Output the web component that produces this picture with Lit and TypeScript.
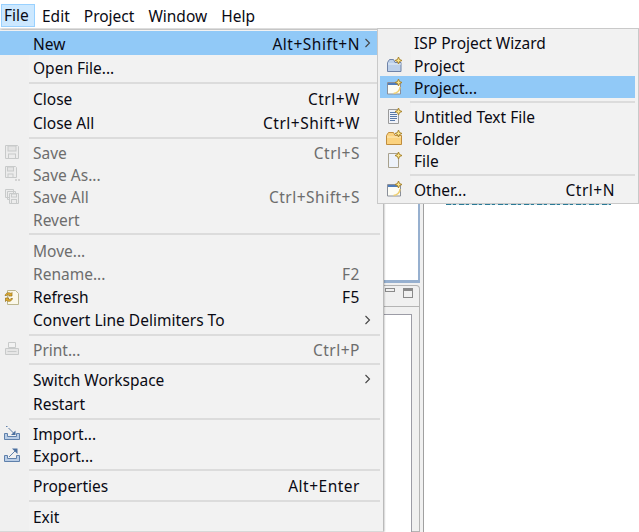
import { LitElement, html, css, svg } from "lit";
import { customElement } from "lit/decorators.js";

const plus = (x: number, y: number) => svg`<path d="M${x} ${y - 3.500}L${x + 1} ${y - 1}L${x + 3.500} ${y}L${x + 1} ${y + 1}L${x} ${y + 3.500}L${x - 1} ${y + 1}L${x - 3.500} ${y}L${x - 1} ${y - 1}Z" fill="#fbe58a" stroke="#a9842c" stroke-width="1"/>`;
const ic = (c: unknown) => html`<svg class="ic" width="18" height="18" viewBox="0 0 18 18">${c}</svg>`;
const grey = "#c8caca";
const icons: Record<string, unknown> = {
  save: ic(svg`<path d="M2.500 2.500h12l1 1v12h-13z" fill="#ececec" stroke="${grey}"/><rect x="5" y="3" width="8" height="5" fill="#e4e4e4" stroke="${grey}"/><rect x="5.500" y="11" width="7" height="4.500" fill="none" stroke="${grey}"/>`),
  saveas: ic(svg`<path d="M2.500 1.500h10l1 1v10h-11z" fill="#ececec" stroke="${grey}"/><rect x="4.500" y="2" width="6" height="4" fill="#e4e4e4" stroke="${grey}"/><rect x="5" y="9" width="5" height="3.500" fill="none" stroke="${grey}"/><path d="M12 15h2M15 15h2" stroke="#b5b5b5"/>`),
  saveall: ic(svg`<path d="M2.500 1.500h8v8h-8zM4.500 3.500h8v8h-8z" fill="#ececec" stroke="${grey}"/><path d="M6.500 5.500h9v10h-9z" fill="#ececec" stroke="${grey}"/><rect x="8.500" y="6" width="5" height="3" fill="none" stroke="${grey}"/><rect x="8.500" y="11.500" width="5" height="4" fill="none" stroke="${grey}"/>`),
  refresh: ic(svg`<path d="M4.500 2.500h8l3 3v11h-11z" fill="#fbf8ea" stroke="#bdb78f"/><path d="M2 7.500c1-3 4-3.500 6-2l1-1v3.500H5.500l1-1c-1-.7-2.500-.5-3 .5zM9.500 10.500c-1 3-4 3.500-6 2l-1 1V10H6l-1 1c1 .7 2.500 .5 3-.5z" fill="#e3ac2c" stroke="#94701a" stroke-width=".7"/>`),
  print: ic(svg`<path d="M5.500 2.500h7v5h-7z" fill="#f2f2f2" stroke="${grey}"/><path d="M2.500 8.500h13v6h-13z" fill="#e6e6e6" stroke="${grey}"/><path d="M4.500 11.500h9" stroke="${grey}"/>`),
  import: ic(svg`<path d="M1.500 9.500h3v3h9v-3h3v6h-15z" fill="#b9cde6" stroke="#5f80ab"/><path d="M3 2.500h1.500M5.500 4l5 5" stroke="#5f80ab" fill="none"/><path d="M12.500 11V6.500L8 11z" fill="#4a6f9f"/>`),
  export: ic(svg`<path d="M1.500 9.500h3v3h9v-3h3v6h-15z" fill="#b9cde6" stroke="#5f80ab"/><path d="M6 11l6-6" stroke="#5f80ab" fill="none"/><path d="M9 2.500h5.500V8z" fill="#4a6f9f"/>`),
  prj: ic(svg`<path d="M2.500 6.500l2-3h4l1.500 3h6v9h-13.500z" fill="#bcd0ea" stroke="#6f83a8"/><path d="M3 8h13" stroke="#e6eef8"/>${plus(13.500, 4.500)}`),
  prjdots: ic(svg`<path d="M2.500 4.500h13v11.500h-13z" fill="#fdfdf6" stroke="#8a8f99"/><path d="M3 5h10v2H3z" fill="#4f7dbb"/><path d="M15 9c0 3.500-3 6.500-6.500 6.500" fill="none" stroke="#efcf70" stroke-width="1.500"/>${plus(13.500, 4.500)}`),
  text: ic(svg`<path d="M3.500 2.500h10v14h-10z" fill="#f0f2f8" stroke="#9a9a9a"/><path d="M5 5.500h6M5 7.500h7M5 9.500h7M5 11.500h7M5 13.500h5" stroke="#5878a8"/>${plus(13.500, 4.500)}`),
  folder: ic(svg`<path d="M1.500 6.500l2-3h5l1.500 3h6.500v9h-15z" fill="#fbd27e" stroke="#c08d3d"/><path d="M2 8h14" stroke="#fdebbd"/>${plus(13.500, 4.500)}`),
  file: ic(svg`<path d="M3.500 2.500h10v14h-10z" fill="#edf2fa" stroke="#a8a18d"/>${plus(13.500, 4.500)}`),
};

type Row =
  | { sep: true; h: number }
  | { label: string; key?: string; icon?: string; dis?: boolean; sub?: boolean; hot?: boolean; h: number };

const mainRows: Row[] = [
  { label: "New", key: "Alt+Shift+N", sub: true, hot: true, h: 24 },
  { label: "Open File...", h: 24 },
  { sep: true, h: 7 },
  { label: "Close", key: "Ctrl+W", h: 24 },
  { label: "Close All", key: "Ctrl+Shift+W", h: 24 },
  { sep: true, h: 7 },
  { label: "Save", key: "Ctrl+S", icon: "save", dis: true, h: 22 },
  { label: "Save As...", icon: "saveas", dis: true, h: 22 },
  { label: "Save All", key: "Ctrl+Shift+S", icon: "saveall", dis: true, h: 23 },
  { label: "Revert", dis: true, h: 22 },
  { sep: true, h: 8 },
  { label: "Move...", dis: true, h: 24 },
  { label: "Rename...", key: "F2", dis: true, h: 23 },
  { label: "Refresh", key: "F5", icon: "refresh", h: 23 },
  { label: "Convert Line Delimiters To", sub: true, h: 23 },
  { sep: true, h: 7 },
  { label: "Print...", key: "Ctrl+P", icon: "print", dis: true, h: 22 },
  { sep: true, h: 7 },
  { label: "Switch Workspace", sub: true, h: 24 },
  { label: "Restart", h: 24 },
  { sep: true, h: 7 },
  { label: "Import...", icon: "import", h: 22 },
  { label: "Export...", icon: "export", h: 22 },
  { sep: true, h: 7 },
  { label: "Properties", key: "Alt+Enter", h: 24 },
  { sep: true, h: 7 },
  { label: "Exit", h: 24 },
];
const subRows: Row[] = [
  { label: "ISP Project Wizard", h: 23 },
  { label: "Project", icon: "prj", h: 22 },
  { label: "Project...", icon: "prjdots", hot: true, h: 22 },
  { sep: true, h: 7 },
  { label: "Untitled Text File", icon: "text", h: 22 },
  { label: "Folder", icon: "folder", h: 22 },
  { label: "File", icon: "file", h: 22 },
  { sep: true, h: 7 },
  { label: "Other...", key: "Ctrl+N", icon: "prjdots", h: 22 },
];

@customElement("app-root")
export class AppRoot extends LitElement {
  static styles = css`
    :host { display: block; width: 639px; height: 532px; position: relative; overflow: hidden; background: #fff;
      font-family: "Noto Sans", "Open Sans", sans-serif; font-size: 15.5px; color: #0a0a14; }
    .bar { display: flex; height: 28px; border-bottom: 2px solid #e4e4e4; box-sizing: content-box; padding-left: 1px; align-items: flex-end; }
    .top { height: 23px; box-sizing: border-box; padding: 0 7px 1px; display: flex; align-items: center; }
    .top.first { padding: 0 2px 1px; background: #cce8ff; border: 1px solid #99d1ff; width: 34px; margin-bottom: 1px; }
    .work { position: relative; height: 502px; display: flex; padding-left: 384px; }
    .pane { width: 36px; display: flex; flex-direction: column; border-right: 1px solid #a0a0a0; padding-right: 3px; background: #f0f0f0; }
    .editor { height: 250px; flex: none; background: #fff; border: solid #97b0cf; border-width: 0 2px 3px 0; }
    .view { margin-top: 2px; flex: 1; border: 1px solid #b4b4b4; border-left: 0; border-top-right-radius: 4px; background: #f0f0f0; }
    .menu { position: absolute; box-sizing: border-box; background: linear-gradient(to right, #f0f0f0 29px, #f2f2f2 29px); }
    .main { left: 0; top: 30px; width: 383px; height: 502px; padding: 1px 0 0; border-bottom: 1px solid #d8d8d8; box-shadow: 1px 0 2px rgba(0, 0, 0, 0.4); }
    .submenu { left: 377px; top: 28px; width: 262px; height: 176px; padding: 2px 1px 0 2px; border: 1px solid #c9c9c9; z-index: 2;
      background: linear-gradient(to right, #f0f0f0 33px, #f2f2f2 33px); }
    .row { display: flex; align-items: center; box-sizing: border-box; position: relative; white-space: nowrap; padding-top: 1px; }
    .main .row { width: 378px; padding-left: 33px; padding-right: 18px; }
    .submenu .row { padding-left: 34px; padding-right: 20px; margin-right: 2px; }
    .lbl { flex: 1; }
    .key { letter-spacing: 0.5px; }
    .hot { background: #91c9f7; }
    .dis { color: #6d6d6d; }
    .sep { display: flex; align-items: center; padding-left: 29px; padding-right: 3px; }
    .submenu .sep { padding-left: 30px; padding-right: 2px; }
    .sep i { display: block; flex: 1; height: 2px; background: #dcdcdc; }
    .ic { position: absolute; left: 3px; top: 50%; transform: translateY(-50%); }
    .submenu .ic { left: 5px; }
    .arrow { position: absolute; left: 364px; top: 50%; transform: translateY(-50%); }
    .sliver { position: absolute; left: 446px; top: 204px; width: 165px; height: 1px;
      background: repeating-linear-gradient(to right, #2a7a96 0 5px, #a9ccd8 5px 7px, #2a7a96 7px 10px, #d5e6ec 10px 13px); }
    .tb { position: absolute; display: block; border: 1px solid #8a8a8a; box-sizing: border-box; }
    .tb.min { left: 385px; top: 288px; width: 10px; height: 4px; }
    .tb.max { left: 403px; top: 288px; width: 10px; height: 10px; border-top-width: 3px; }
    .inner { position: absolute; left: 384px; top: 314px; width: 28px; height: 218px; background: #fff; border-top: 1px solid #9c9ca6; border-right: 1px solid #9c9ca6; box-sizing: border-box; }
    .rule { position: absolute; left: 384px; top: 306px; width: 35px; height: 1px; background: #b4b4b4; }
  `;

  private renderRow(r: Row) {
    if ("sep" in r) return html`<div class="sep" style="height:${r.h}px"><i></i></div>`;
    return html`<div class="row ${r.hot ? "hot" : ""} ${r.dis ? "dis" : ""}" style="height:${r.h}px">
      ${r.icon ? icons[r.icon] : ""}
      <span class="lbl">${r.label}</span>
      ${r.key ? html`<span class="key">${r.key}</span>` : ""}
      ${r.sub
        ? html`<svg class="arrow" width="8" height="10" viewBox="0 0 8 10"><path d="M1.500 1l4 4-4 4" fill="none" stroke="#444" stroke-width="1.100"/></svg>`
        : ""}
    </div>`;
  }

  render() {
    return html`
      <div class="bar">
        <div class="top first">File</div>
        <div class="top">Edit</div>
        <div class="top">Project</div>
        <div class="top">Window</div>
        <div class="top">Help</div>
      </div>
      <div class="work">
        <div class="pane">
          <div class="editor"></div>
          <div class="view"></div>
        </div>
      </div>
      <span class="tb min"></span><span class="tb max"></span>
      <div class="rule"></div>
      <div class="inner"></div>
      <div class="sliver"></div>
      <div class="menu main">${mainRows.map((r) => this.renderRow(r))}</div>
      <div class="menu submenu">${subRows.map((r) => this.renderRow(r))}</div>
    `;
  }
}
